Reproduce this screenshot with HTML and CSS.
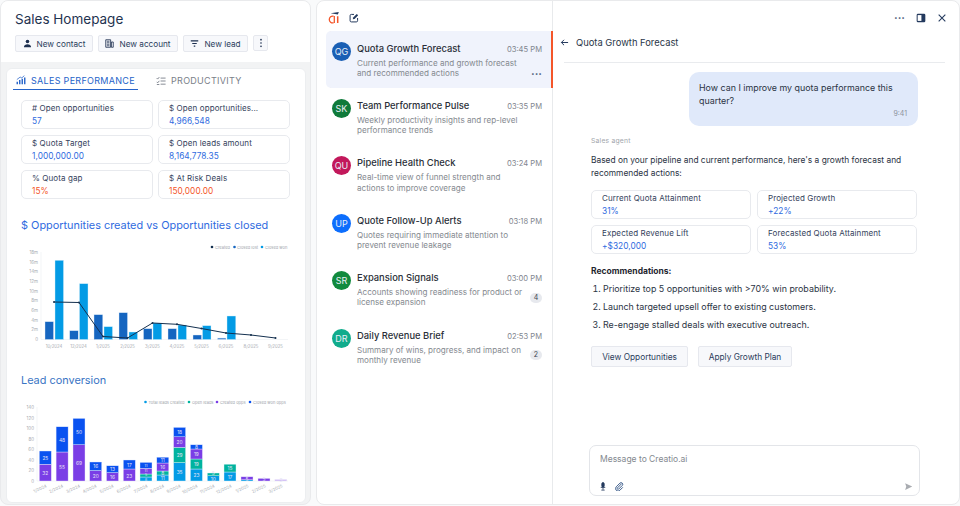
FILE: index.html
```html
<!DOCTYPE html>
<html lang="en">
<head>
<meta charset="utf-8">
<title>Sales Homepage</title>
<link rel="stylesheet" href="styles.css">
</head>
<body>
<div class="app">
  <section class="home">
    <header class="home-head">
      <h1>Sales Homepage</h1>
      <div class="actions">
        <button class="act act-contact"><svg viewBox="0 0 12 12" class="ic"><circle cx="6" cy="3.4" r="2.4" fill="#1d2f4f"/><path d="M1.2 11c0-2.7 2.2-4 4.8-4s4.8 1.3 4.8 4z" fill="#1d2f4f"/></svg>New contact</button>
        <button class="act act-account"><svg viewBox="0 0 12 12" class="ic"><path d="M1 1h6.5v10H1zM8.5 4H11v7H8.5z" fill="none" stroke="#1d2f4f" stroke-width="1.1"/><path d="M2.5 3H6M2.5 5H6M2.5 7H6M2.5 9H6" stroke="#1d2f4f" stroke-width="1"/></svg>New account</button>
        <button class="act act-lead"><svg viewBox="0 0 12 12" class="ic"><path d="M1 2.5h10M3 6h6M5 9.5h2" stroke="#1d2f4f" stroke-width="1.5" fill="none"/></svg>New lead</button>
        <button class="act act-more"><svg viewBox="0 0 4 12" class="ic-more"><circle cx="2" cy="2" r="1" fill="#1d2f4f"/><circle cx="2" cy="6" r="1" fill="#1d2f4f"/><circle cx="2" cy="10" r="1" fill="#1d2f4f"/></svg></button>
      </div>
    </header>
    <div class="home-body">
      <div class="card">
        <nav class="tabs">
          <div class="tab tab-on"><svg viewBox="0 0 12 12" class="ic"><path d="M1.5 11V8M4.5 11V6M7.5 11V4.5M10.5 11V3" stroke="#2563c9" stroke-width="1.7"/><path d="M1 5.5 5 2.5 7 3.5 10 .8" stroke="#2563c9" stroke-width=".9" fill="none"/></svg>SALES PERFORMANCE</div>
          <div class="tab"><svg viewBox="0 0 12 12" class="ic"><path d="M.8 2.5 2 3.7 4 1.3M.8 7 2 8.2 4 5.8M5.5 2.5H11.5M5.5 6H11.5M5.5 9.8H11.5M1 10.2H4" stroke="#6d7480" stroke-width="1" fill="none"/></svg>PRODUCTIVITY</div>
        </nav>
        <div class="stats">
          <div class="stat"><span class="stat-k">#&nbsp;Open opportunities</span><span class="stat-v">57</span></div>
          <div class="stat"><span class="stat-k">$ Open opportunities...</span><span class="stat-v">4,966,548</span></div>
          <div class="stat"><span class="stat-k">$ Quota Target</span><span class="stat-v">1,000,000.00</span></div>
          <div class="stat"><span class="stat-k">$ Open leads amount</span><span class="stat-v">8,164,778.35</span></div>
          <div class="stat"><span class="stat-k">% Quota gap</span><span class="stat-v stat-red">15%</span></div>
          <div class="stat"><span class="stat-k">$ At Risk Deals</span><span class="stat-v stat-red">150,000.00</span></div>
        </div>
        <h2 class="chart-title">$ Opportunities created vs Opportunities closed</h2>
        <svg class="chart chart-a" viewBox="20 240 270 115" role="img">
          <g class="grid-y"><text x="38" y="254">18m</text><text x="38" y="263.7">16m</text><text x="38" y="273.3">14m</text><text x="38" y="283">12m</text><text x="38" y="292.7">10m</text><text x="38" y="302.3">8m</text><text x="38" y="312">6m</text><text x="38" y="321.7">4m</text><text x="38" y="331.3">2m</text><text x="38" y="341">0</text></g>
          <path d="M41 339.5H288M41 252v87.5" stroke="#eef0f3" stroke-width=".7" fill="none"/>
          <g class="lost"><rect x="45" y="321.7" width="8.5" height="17.8"/><rect x="69.7" y="330.7" width="8.5" height="8.8"/><rect x="94" y="314.7" width="8.8" height="24.8"/><rect x="119" y="312.7" width="8.5" height="26.8"/><rect x="143.5" y="328.7" width="8.5" height="10.8"/><rect x="168" y="328.7" width="8.5" height="10.8"/><rect x="193" y="335" width="8.5" height="4.5"/><rect x="217.5" y="338" width="8.5" height="1.5" opacity=".8"/></g>
          <g class="won"><rect x="55" y="260.3" width="8.5" height="79.2"/><rect x="79.5" y="283.7" width="8.5" height="55.8"/><rect x="104" y="326.7" width="8.5" height="12.8"/><rect x="129" y="332" width="8.5" height="7.5"/><rect x="153" y="323" width="8.8" height="16.5"/><rect x="178" y="325" width="8.5" height="14.5"/><rect x="202.5" y="325.7" width="8.5" height="13.8"/><rect x="227" y="316" width="8.8" height="23.5"/></g>
          <polyline points="54,302 79,302.5 103,336.5 127.5,338 152.5,323 177,324.3 201.5,328.5 226,333 251,335 275.5,338" fill="none" stroke="#14304f" stroke-width="1"/>
          <g fill="#14304f"><circle cx="54" cy="302" r="1"/><circle cx="79" cy="302.5" r="1"/><circle cx="103" cy="336.5" r="1"/><circle cx="127.5" cy="338" r="1"/><circle cx="152.5" cy="323" r="1"/><circle cx="177" cy="324.3" r="1"/><circle cx="201.5" cy="328.5" r="1"/><circle cx="226" cy="333" r="1"/><circle cx="251" cy="335" r="1"/><circle cx="275.5" cy="338" r="1"/></g>
          <g class="xlab"><text x="54" y="347.5">10/2024</text><text x="78.5" y="347.5">12/2024</text><text x="103" y="347.5">1/2025</text><text x="127.5" y="347.5">2/2025</text><text x="152.5" y="347.5">3/2025</text><text x="177" y="347.5">4/2025</text><text x="201.5" y="347.5">5/2025</text><text x="226" y="347.5">6/2025</text><text x="251" y="347.5">8/2025</text><text x="275.5" y="347.5">9/2025</text></g>
          <g class="legend"><circle cx="212" cy="247" r="1.3" fill="#14304f"/><text x="215" y="248.5">Created</text><circle cx="234.5" cy="247" r="1.3" fill="#1565c0"/><text x="237" y="248.5">Closed lost</text><circle cx="262" cy="247" r="1.3" fill="#039be5"/><text x="265" y="248.5">Closed won</text></g>
        </svg>
        <h2 class="chart-title chart-title-b">Lead conversion</h2>
        <svg class="chart chart-b" viewBox="20 396 270 105" role="img">
          <g class="grid-y"><text x="34" y="409">140</text><text x="34" y="419.5">120</text><text x="34" y="430">100</text><text x="34" y="440.5">80</text><text x="34" y="451">60</text><text x="34" y="461.5">40</text><text x="34" y="472">20</text><text x="34" y="482.5">0</text></g>
          <path d="M37 481H288M37 407v74" stroke="#eef0f3" stroke-width=".7" fill="none"/>
          <g class="s-cy"><rect x="140" y="477" width="12" height="4"/><rect x="156.8" y="475" width="12" height="6"/><rect x="173.6" y="462.6" width="12" height="18.4"/><rect x="190.4" y="469" width="12" height="12"/><rect x="207.3" y="475.8" width="12" height="5.2"/><rect x="224" y="472" width="12" height="9"/><rect x="241" y="479.8" width="12" height="1.2"/></g>
          <g class="s-te"><rect x="140" y="474" width="12" height="3"/><rect x="156.8" y="471" width="12" height="4"/><rect x="173.6" y="447.3" width="12" height="15.3"/><rect x="190.4" y="459" width="12" height="10"/><rect x="207.3" y="473" width="12" height="2.8"/><rect x="224" y="464.2" width="12" height="7.8"/></g>
          <g class="s-pu"><rect x="39.3" y="464.2" width="12" height="16.8"/><rect x="56.1" y="452" width="12" height="29"/><rect x="73" y="444.7" width="12" height="36.3"/><rect x="89.7" y="470.5" width="12" height="10.5"/><rect x="106.5" y="472.6" width="12" height="8.4"/><rect x="123.3" y="469" width="12" height="12"/><rect x="140" y="468.2" width="12" height="5.8"/><rect x="156.8" y="463" width="12" height="8"/><rect x="173.6" y="436.8" width="12" height="10.5"/><rect x="190.4" y="449" width="12" height="10"/><rect x="241" y="476.8" width="12" height="3"/><rect x="258" y="478.4" width="12" height="2.6"/><rect x="274.8" y="479.4" width="12" height="1.6" opacity=".35"/></g>
          <g class="s-bl"><rect x="39.3" y="451" width="12" height="13.2"/><rect x="56.1" y="426.8" width="12" height="25.2"/><rect x="73" y="418.4" width="12" height="26.3"/><rect x="89.7" y="462" width="12" height="8.5"/><rect x="106.5" y="465.8" width="12" height="6.8"/><rect x="123.3" y="460" width="12" height="9"/><rect x="140" y="462.4" width="12" height="5.8"/><rect x="156.8" y="457.2" width="12" height="5.8"/><rect x="173.6" y="427.4" width="12" height="9.4"/><rect x="190.4" y="444.8" width="12" height="4.2"/></g>
          <g class="vals"><text x="45.3" y="475">32</text><text x="45.3" y="459.5">25</text><text x="62" y="468.5">55</text><text x="62" y="441.5">48</text><text x="79" y="465">69</text><text x="79" y="433.5">50</text><text x="95.7" y="477.8">20</text><text x="95.7" y="468">16</text><text x="112.5" y="479">16</text><text x="112.5" y="471">13</text><text x="129.3" y="477.5">23</text><text x="129.3" y="466.5">17</text><text class="val-sm" x="146" y="480.6">8</text><text class="val-sm" x="146" y="476.3">5</text><text class="val-sm" x="146" y="472">11</text><text class="val-sm" x="146" y="466.5">11</text><text x="162.8" y="480">11</text><text x="162.8" y="474.8">8</text><text x="162.8" y="468.8">16</text><text x="162.8" y="462">11</text><text x="179.6" y="473.8">35</text><text x="179.6" y="457">29</text><text x="179.6" y="444">20</text><text x="179.6" y="434">18</text><text x="196.4" y="477">23</text><text x="196.4" y="466">19</text><text x="196.4" y="456">19</text><text x="196.4" y="448.8">8</text><text x="213.3" y="480.5">10</text><text x="213.3" y="475">5</text><text x="230" y="478.5">17</text><text x="230" y="470">15</text><text x="247" y="480.5">5</text><text x="264" y="481">5</text><text x="281" y="481.5">3</text></g>
          <g class="xlab xlab-rot"><text transform="translate(47 487) rotate(-25)">1/2024</text><text transform="translate(63.5 487) rotate(-25)">2/2024</text><text transform="translate(80.5 487) rotate(-25)">3/2024</text><text transform="translate(97 487) rotate(-25)">4/2024</text><text transform="translate(114 487) rotate(-25)">5/2024</text><text transform="translate(131 487) rotate(-25)">6/2024</text><text transform="translate(148 487) rotate(-25)">7/2024</text><text transform="translate(164.5 487) rotate(-25)">8/2024</text><text transform="translate(181 487) rotate(-25)">9/2024</text><text transform="translate(198 487) rotate(-25)">10/2024</text><text transform="translate(215 487) rotate(-25)">11/2024</text><text transform="translate(232 487) rotate(-25)">12/2024</text><text transform="translate(249 487) rotate(-25)">1/2025</text><text transform="translate(266 487) rotate(-25)">2/2025</text><text transform="translate(283 487) rotate(-25)">3/2025</text></g>
          <g class="legend"><circle cx="145.5" cy="402" r="1.3" fill="#039be5"/><text x="148.5" y="403.5">Total leads created</text><circle cx="189" cy="402" r="1.3" fill="#00b39f"/><text x="192" y="403.5">Open leads</text><circle cx="217" cy="402" r="1.3" fill="#7a3ee6"/><text x="220" y="403.5">Created opps</text><circle cx="250" cy="402" r="1.3" fill="#0a52f0"/><text x="253" y="403.5">Closed won opps</text></g>
        </svg>
      </div>
    </div>
  </section>

  <section class="ai">
    <aside class="threads">
      <div class="brand">
        <svg viewBox="0 0 14 14" class="logo"><path d="M6.5 5.2a3.4 3.4 0 1 0 0 6.6M7.3 5v7" stroke="#f4562a" stroke-width="1.3" fill="none"/><path d="M10.7 5.2V12" stroke="#f4562a" stroke-width="1.5"/><path d="M3.6 2.2 11.8 1l-.9 2.5z" fill="#243a5e"/></svg>
        <svg viewBox="0 0 12 12" class="edit"><path d="M6 1.7H2.8A1.5 1.5 0 0 0 1.3 3.2v6A1.5 1.5 0 0 0 2.8 10.7h6a1.5 1.5 0 0 0 1.5-1.5V6" fill="none" stroke="#243a5e" stroke-width="1.2"/><path d="M4.5 7.6 5 5.4 9.3 1.1 11 2.8 6.7 7.1z" fill="#243a5e"/></svg>
      </div>
      <ul class="thread-list">
        <li class="thread thread-on">
          <span class="ava ava-qg">QG</span>
          <div class="thread-main"><div class="thread-top"><b>Quota Growth Forecast</b><time>03:45 PM</time></div><div class="thread-sub"><p>Current performance and growth forecast and recommended actions</p><span class="dots">···</span></div></div>
        </li>
        <li class="thread">
          <span class="ava ava-sk">SK</span>
          <div class="thread-main"><div class="thread-top"><b>Team Performance Pulse</b><time>03:35 PM</time></div><div class="thread-sub"><p>Weekly productivity insights and rep-level performance trends</p></div></div>
        </li>
        <li class="thread">
          <span class="ava ava-qu">QU</span>
          <div class="thread-main"><div class="thread-top"><b>Pipeline Health Check</b><time>03:24 PM</time></div><div class="thread-sub"><p>Real-time view of funnel strength and actions to improve coverage</p></div></div>
        </li>
        <li class="thread">
          <span class="ava ava-up">UP</span>
          <div class="thread-main"><div class="thread-top"><b>Quote Follow-Up Alerts</b><time>03:18 PM</time></div><div class="thread-sub"><p>Quotes requiring immediate attention to prevent revenue leakage</p></div></div>
        </li>
        <li class="thread">
          <span class="ava ava-sr">SR</span>
          <div class="thread-main"><div class="thread-top"><b>Expansion Signals</b><time>03:00 PM</time></div><div class="thread-sub"><p>Accounts showing readiness for product or license expansion</p><span class="count">4</span></div></div>
        </li>
        <li class="thread">
          <span class="ava ava-dr">DR</span>
          <div class="thread-main"><div class="thread-top"><b>Daily Revenue Brief</b><time>02:53 PM</time></div><div class="thread-sub"><p>Summary of wins, progress, and impact on monthly revenue</p><span class="count">2</span></div></div>
        </li>
      </ul>
    </aside>
    <main class="chat">
      <div class="win-bar">
        <span class="win-dots">···</span>
        <svg viewBox="0 0 12 12" class="win-ic"><rect x=".8" y="1" width="10.4" height="10" rx="1.5" fill="#243a5e"/><rect x="2" y="2.5" width="4.5" height="7" fill="#fff"/></svg>
        <svg viewBox="0 0 12 12" class="win-ic"><path d="M2 2l8 8M10 2l-8 8" stroke="#243a5e" stroke-width="1.3"/></svg>
      </div>
      <div class="chat-head">
        <svg viewBox="0 0 10 10" class="back"><path d="M9 5H1.5M4.500 2 1.500 5l3 3" stroke="#243a5e" stroke-width="1.1" fill="none"/></svg>
        <h3>Quota Growth Forecast</h3>
      </div>
      <hr class="chat-rule">
      <div class="chat-body">
        <div class="bubble">
          <p>How can I improve my quota performance this quarter?</p>
          <time>9:41</time>
        </div>
        <div class="reply">
          <div class="agent">Sales agent</div>
          <p class="intro">Based on your pipeline and current performance, here's a growth forecast and recommended actions:</p>
          <div class="kpis">
            <div class="stat"><span class="stat-k">Current Quota Attainment</span><span class="stat-v">31%</span></div>
            <div class="stat"><span class="stat-k">Projected Growth</span><span class="stat-v">+22%</span></div>
            <div class="stat"><span class="stat-k">Expected Revenue Lift</span><span class="stat-v">+$320,000</span></div>
            <div class="stat"><span class="stat-k">Forecasted Quota Attainment</span><span class="stat-v">53%</span></div>
          </div>
          <h4>Recommendations:</h4>
          <ol>
            <li>Prioritize top 5 opportunities with &gt;70% win probability.</li>
            <li>Launch targeted upsell offer to existing customers.</li>
            <li>Re-engage stalled deals with executive outreach.</li>
          </ol>
          <div class="reply-btns"><button class="act act-view">View Opportunities</button><button class="act act-apply">Apply Growth Plan</button></div>
        </div>
      </div>
      <div class="composer">
        <div class="ph">Message to Creatio.ai</div>
        <div class="composer-bar">
          <svg viewBox="0 0 8 12" class="mic"><path d="M4 .8a1.6 1.6 0 0 1 1.6 1.6v2.8a1.6 1.6 0 0 1-3.2 0V2.4A1.6 1.6 0 0 1 4 .8zM1 7.2h6M4 7.2v3M1.8 10.8h4.4" fill="#243a5e" stroke="#243a5e" stroke-width="1.1"/></svg>
          <svg viewBox="0 0 12 12" class="clip"><path d="M8.9 2.2 3.2 7.900a1.100 1.100 0 0 0 1.600 1.600l5-5a2.200 2.200 0 0 0-3.100-3.100l-5 5a3.300 3.300 0 0 0 4.700 4.700l4-4" fill="none" stroke="#3a5a8a" stroke-width="1.3"/></svg>
          <svg viewBox="0 0 12 12" class="send"><path d="M1.5 1.5 11 6l-9.500 4.500L3 6z" fill="#a9acb1"/></svg>
        </div>
      </div>
    </main>
  </section>
</div>
</body>
</html>
```
FILE: styles.css
```css
* { box-sizing: border-box; }
html, body { margin: 0; padding: 0; }
body { width: 960px; height: 506px; overflow: hidden; background: #f9fafb; font-family: Inter, "Noto Sans", sans-serif; color: #1f2937; }
h1, h2, h3, h4, p, ul, ol { margin: 0; padding: 0; font-weight: 400; }
ul { list-style: none; }
button { font-family: inherit; }

.app { display: flex; gap: 5px; height: 505px; }

/* left dashboard */
.home { width: 311px; height: 505px; display: flex; flex-direction: column; background: #f2f3f4; border: 1px solid #e9eaec; border-radius: 8px; overflow: hidden; }
.home-head { height: 61px; flex: none; background: #fff; padding: 10px 14px 0; }
.home-head h1 { font-size: 13.5px; line-height: 17px; color: #1f3350; }
.actions { display: flex; gap: 5px; margin-top: 7px; }
.act { display: inline-flex; align-items: center; justify-content: center; gap: 5px; height: 17px; padding: 0; background: #f7f8fb; border: 1px solid #e6e8ee; border-radius: 2px; font-size: 8.2px; color: #2b3d5c; }
.ic { width: 9px; height: 9px; flex: none; }
.act-contact { width: 78px; }
.act-account { width: 80px; }
.act-lead { width: 65px; }
.act-more { width: 15px; height: 16px; }
.ic-more { width: 4px; height: 10px; }

.home-body { flex: 1; padding: 6px 4px 1px 5px; min-height: 0; }
.card { height: 100%; background: #fff; border: 1px solid #eceef0; border-radius: 6px; padding: 2px 0 0 6px; }

.tabs { display: flex; gap: 15px; height: 19px; }
.tab { display: flex; align-items: center; gap: 5px; height: 19px; padding: 0 3px; font-size: 9px; color: #7a8089; letter-spacing: .3px; white-space: nowrap; }
.tab .ic { width: 10px; height: 10px; }
.tab-on { width: 125px; color: #2563c9; border-bottom: 1px solid #2563c9; }

.stats { display: grid; grid-template-columns: 132px 132px; gap: 6px 5px; margin: 10px 0 0 8px; }
.stat { display: flex; flex-direction: column; justify-content: center; height: 29px; padding: 0 0 0 10px; border: 1px solid #e8eaee; border-radius: 5px; background: #fff; }
.stat-k { font-size: 8px; line-height: 13px; color: #34425c; letter-spacing: .1px; }
.stat-v { font-size: 8.3px; line-height: 13px; color: #2f6be0; letter-spacing: .05px; }
.stat-red { color: #f4562a; }

.chart-title { margin: 19px 0 0 8px; font-size: 10.9px; line-height: 14px; color: #2f6be0; white-space: nowrap; }
.chart-title-b { margin-top: 18px; color: #3a75c4; }
.chart { display: block; margin-left: 7px; width: 270px; overflow: visible; }
.chart-a { height: 115px; margin-top: 8px; }
.chart-b { height: 105px; margin-top: 9px; }
.grid-y text { font-size: 4.5px; fill: #a7abb1; text-anchor: end; font-family: Inter, sans-serif; }
.xlab text { font-size: 4.3px; fill: #a7abb1; text-anchor: middle; font-family: Inter, sans-serif; }
.xlab-rot text { text-anchor: end; }
.legend text { font-size: 4px; fill: #9ea3aa; font-family: Inter, sans-serif; }
.vals text { font-size: 4.8px; fill: #e6e3f5; text-anchor: middle; font-family: Inter, sans-serif; }
.vals .val-sm { font-size: 3.5px; }
.lost rect { fill: #1565c0; stroke: #dcecf9; stroke-width: .4; }
.won rect { fill: #039be5; stroke: #d4eefb; stroke-width: .4; }
.s-cy rect { fill: #039be5; stroke: #e4f4fd; stroke-width: .4; }
.s-te rect { fill: #00b39f; stroke: #def6f3; stroke-width: .4; }
.s-pu rect { fill: #7a3ee6; stroke: #ebe3fb; stroke-width: .4; }
.s-bl rect { fill: #0a52f0; stroke: #dfe8fd; stroke-width: .4; }

/* right panel */
.ai { flex: 1; height: 505px; display: flex; background: #fff; border: 1px solid #e9eaec; border-radius: 8px; overflow: hidden; }
.threads { width: 236px; flex: none; padding: 0 0 0 9px; border-right: 1px solid #e8eaec; }
.brand { display: flex; align-items: center; gap: 8px; height: 30px; padding: 4px 0 0 1px; }
.logo { width: 14px; height: 14px; }
.edit { width: 10px; height: 10px; }
.thread-list { width: 225px; }
.thread { display: flex; gap: 6px; height: 57.4px; padding: 11px 9px 0 6px; }
.thread-on { background: #f0f3fc; border-radius: 5px 0 0 5px; height: 57px; box-shadow: 2px 0 0 #f4562a; }
.ava { flex: none; width: 19px; height: 19px; border-radius: 50%; color: #e9eef7; font-size: 9px; line-height: 19px; text-align: center; }
.ava-qg { background: #1a5fb4; }
.ava-sk { background: #0f7a3a; }
.ava-qu { background: #c2185b; }
.ava-up { background: #0d6efd; }
.ava-sr { background: #128a3e; }
.ava-dr { background: #10ac8c; }
.thread-main { flex: 1; min-width: 0; }
.thread-top { display: flex; justify-content: space-between; align-items: baseline; line-height: 13px; }
.thread-top b { font-weight: 500; font-size: 9.4px; color: #2a2f38; }
.thread-top time { font-size: 7.6px; color: #7f858e; }
.thread-sub { display: flex; justify-content: space-between; align-items: flex-end; margin-top: 2px; }
.thread-sub p { width: 169px; font-size: 8.1px; line-height: 10.3px; color: #84898f; }
.dots { font-size: 11px; line-height: 10px; color: #4a5a78; font-weight: 700; }
.count { width: 12px; height: 10px; border-radius: 5px; background: #e7e9ee; color: #3d4652; font-size: 7px; line-height: 10px; text-align: center; margin-bottom: 5px; }

.chat { flex: 1; min-width: 0; display: flex; flex-direction: column; padding: 0 12px 0 7px; }
.win-bar { display: flex; justify-content: flex-end; align-items: center; gap: 11px; height: 30px; padding: 4px 0 0; }
.win-dots { font-size: 11px; font-weight: 700; color: #4a5a78; line-height: 10px; }
.win-ic { width: 10px; height: 10px; }
.chat-head { display: flex; align-items: center; gap: 7px; height: 31px; padding-bottom: 8px; }
.back { width: 9px; height: 9px; }
.chat-head h3 { font-size: 9.4px; color: #2a3648; }
.chat-rule { height: 1px; margin: 0 2px 0 4px; border: 0; background: #e9ebee; }
.chat-body { flex: 1; min-height: 0; }
.bubble { width: 229px; height: 54px; margin: 9px 0 0 129px; padding: 9px 11px 0 10px; background: #e0e9fa; border-radius: 10px; }
.bubble p { font-size: 8.9px; line-height: 13px; color: #2b3444; }
.bubble time { display: block; margin-top: 2px; text-align: right; font-size: 7px; line-height: 9px; color: #8c929c; }
.reply { margin: 0 0 0 31px; width: 330px; }
.agent { margin-top: 10px; font-size: 6.8px; line-height: 9px; color: #a2a6ac; letter-spacing: .2px; }
.intro { margin-top: 9px; font-size: 8.4px; line-height: 13px; color: #2b3444; }
.kpis { display: grid; grid-template-columns: 160px 160px; gap: 6px; margin-top: 10px; }
.reply h4 { margin-top: 11px; font-size: 8.5px; line-height: 13px; font-weight: 700; color: #1f2630; }
.reply ol { margin-top: 2px; padding-left: 12px; }
.reply ol li { font-size: 8.9px; line-height: 18px; color: #2b3444; }
.reply-btns { display: flex; gap: 10px; margin-top: 12px; }
.act-view { width: 97px; height: 21px; font-size: 8.3px; }
.act-apply { width: 94px; height: 21px; font-size: 8.3px; }
.composer { flex: none; height: 51px; width: 331px; margin: 0 0 8px 29px; padding: 8px 6px 0 10px; border: 1px solid #e3e5e9; border-radius: 7px; }
.ph { font-size: 8.5px; line-height: 11px; color: #84898f; }
.composer-bar { display: flex; align-items: center; gap: 9px; margin-top: 17px; }
.mic { width: 6px; height: 9px; }
.clip { width: 9px; height: 9px; }
.send { width: 9px; height: 9px; margin-left: auto; }
```
